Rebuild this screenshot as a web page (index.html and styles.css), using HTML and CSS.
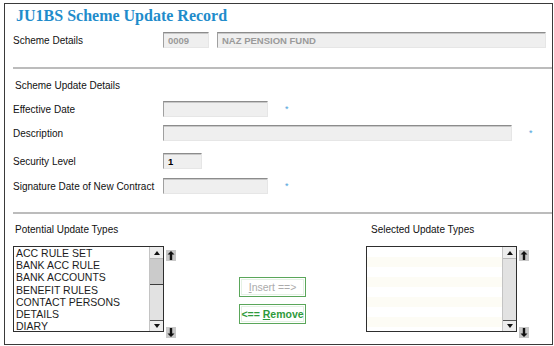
FILE: index.html
```html
<!DOCTYPE html>
<html lang="en">
<head>
    <meta charset="UTF-8">
    <title>JU1BS Scheme Update Record</title>
    <link rel="stylesheet" href="styles.css">
</head>
<body>
    <div class="frame">
        <h1 class="title">JU1BS Scheme Update Record</h1>

        <div class="row row-scheme">
            <span class="label">Scheme Details</span>
            <span class="field f-code">0009</span>
            <span class="field f-name">NAZ PENSION FUND</span>
        </div>

        <div class="divider div-top"></div>

        <div class="section-head">Scheme Update Details</div>

        <div class="row row-eff">
            <span class="label">Effective Date</span>
            <span class="field f-date"></span>
            <span class="req">*</span>
        </div>
        <div class="row row-desc">
            <span class="label">Description</span>
            <span class="field f-desc"></span>
            <span class="req">*</span>
        </div>
        <div class="row row-sec">
            <span class="label">Security Level</span>
            <span class="field f-sec">1</span>
        </div>
        <div class="row row-sig">
            <span class="label">Signature Date of New Contract</span>
            <span class="field f-date"></span>
            <span class="req">*</span>
        </div>

        <div class="divider div-bottom"></div>

        <div class="lists">
            <div class="group">
                <div class="group-label">Potential Update Types</div>
                <div class="list-wrap">
                    <div class="listbox">
                        <div class="items">
                            <div>ACC RULE SET</div>
                            <div>BANK ACC RULE</div>
                            <div>BANK ACCOUNTS</div>
                            <div>BENEFIT RULES</div>
                            <div>CONTACT PERSONS</div>
                            <div>DETAILS</div>
                            <div>DIARY</div>
                        </div>
                        <div class="scrollbar">
                            <div class="sb-btn"><span class="tri-up"></span></div>
                            <div class="sb-thumb"></div>
                            <div class="sb-fill"></div>
                            <div class="sb-btn sb-down"><span class="tri-down"></span></div>
                        </div>
                    </div>
                    <div class="mv-col">
                        <div class="mv"><svg width="8" height="9" viewBox="0 0 8 9"><path d="M4 0 L0.5 3.5 H2.8 V9 H5.2 V3.5 H7.5 Z" fill="#111"/></svg></div>
                        <div class="mv"><svg width="8" height="9" viewBox="0 0 8 9"><path d="M4 9 L0.5 5.5 H2.8 V0 H5.2 V5.5 H7.5 Z" fill="#111"/></svg></div>
                    </div>
                </div>
            </div>

            <div class="actions">
                <div class="btn btn-insert"><u>I</u>nsert ==&gt;</div>
                <div class="btn btn-remove">&lt;== <u>R</u>emove</div>
            </div>

            <div class="group group-right">
                <div class="group-label">Selected Update Types</div>
                <div class="list-wrap">
                    <div class="listbox">
                        <div class="items items-empty"></div>
                        <div class="scrollbar">
                            <div class="sb-btn"><span class="tri-up"></span></div>
                            <div class="sb-fill"></div>
                            <div class="sb-btn sb-down"><span class="tri-down"></span></div>
                        </div>
                    </div>
                    <div class="mv-col">
                        <div class="mv"><svg width="8" height="9" viewBox="0 0 8 9"><path d="M4 0 L0.5 3.5 H2.8 V9 H5.2 V3.5 H7.5 Z" fill="#111"/></svg></div>
                        <div class="mv"><svg width="8" height="9" viewBox="0 0 8 9"><path d="M4 9 L0.5 5.5 H2.8 V0 H5.2 V5.5 H7.5 Z" fill="#111"/></svg></div>
                    </div>
                </div>
            </div>
        </div>
    </div>
</body>
</html>
```

FILE: styles.css
```css
body {
    margin: 0;
    background: #fff;
    font-family: "Liberation Sans", Arial, sans-serif;
    color: #111;
}

.frame {
    box-sizing: border-box;
    width: 549px;
    height: 342px;
    margin: 3px 0 0 4px;
    border: 1px solid #3a3a3a;
}

.title {
    margin: 0;
    padding-left: 11px;
    height: 24px;
    line-height: 24px;
    font-family: "Liberation Serif", "Times New Roman", serif;
    font-size: 16px;
    font-weight: bold;
    color: #1f8ccb;
}

.row {
    display: flex;
    align-items: center;
    height: 16px;
    padding-left: 8px;
}

.label {
    width: 150px;
    flex-shrink: 0;
    font-size: 10px;
}

.row-scheme { margin-top: 4px; }
.row-eff { margin-top: 8px; }
.row-desc { margin-top: 8px; }
.row-sec { margin-top: 12px; }
.row-sig { margin-top: 9px; }

.field {
    box-sizing: border-box;
    height: 16px;
    background: #efefef;
    border-top: 1px solid #8c8c8c;
    border-left: 1px solid #a0a0a0;
    border-right: 1px solid #e6e6e6;
    border-bottom: 1px solid #e6e6e6;
    box-shadow: inset 0 1px 0 #c8c8c8;
    padding-left: 4px;
    font-size: 9.5px;
    font-weight: bold;
    line-height: 15px;
    color: #9a9a9a;
}

.f-code { width: 46px; }
.f-name { width: 329px; margin-left: 8px; }
.f-date { width: 105px; }
.f-desc { width: 349px; }
.f-sec {
    width: 39px;
    color: #000;
}

.req {
    margin-left: 17px;
    font-size: 9px;
    color: #4aa3dc;
}

.divider {
    height: 2px;
    margin-left: 8px;
    background: #bcbcbc;
}

.div-top { margin-top: 19px; }
.div-bottom { margin-top: 18px; }

.section-head {
    margin-top: 10px;
    padding-left: 10px;
    height: 14px;
    line-height: 14px;
    font-size: 10px;
}

.lists {
    display: flex;
    margin-top: 9px;
    padding-left: 8px;
}

.group-label {
    height: 14px;
    line-height: 14px;
    padding-left: 2px;
    margin-bottom: 9px;
    font-size: 10px;
}

.group-right {
    margin-left: 60px;
}

.group-right .group-label {
    padding-left: 5px;
}

.list-wrap {
    display: flex;
    align-items: flex-start;
    gap: 2px;
}

.listbox {
    box-sizing: border-box;
    display: flex;
    width: 151px;
    height: 86px;
    border: 1px solid #2e2e2e;
}

.items {
    flex: 1;
    overflow: hidden;
    padding-left: 2px;
    font-size: 10.5px;
    line-height: 12.2px;
    color: #1c1c1c;
}

.items-empty {
    background: repeating-linear-gradient(#fff 0, #fff 10px, #fdfcf5 10px, #fdfcf5 20px);
}

.scrollbar {
    display: flex;
    flex-direction: column;
    width: 13px;
    background: #e2e2e2;
    border-left: 1px solid #c4c4c4;
}

.sb-btn {
    display: flex;
    align-items: center;
    justify-content: center;
    height: 11px;
    background: #ececec;
    border-bottom: 1px solid #b8b8b8;
}

.sb-down {
    height: 10px;
    border-bottom: none;
    border-top: 1px solid #555;
}

.sb-thumb {
    height: 25px;
    background: #cbcbcb;
    border-bottom: 1px solid #3c3c3c;
}

.sb-fill {
    flex: 1;
}

.tri-up {
    width: 0;
    height: 0;
    border-left: 3px solid transparent;
    border-right: 3px solid transparent;
    border-bottom: 4px solid #111;
}

.tri-down {
    width: 0;
    height: 0;
    border-left: 3px solid transparent;
    border-right: 3px solid transparent;
    border-top: 4px solid #111;
}

.mv-col {
    box-sizing: border-box;
    display: flex;
    flex-direction: column;
    justify-content: space-between;
    height: 92px;
    padding-top: 4px;
}

.mv {
    display: flex;
    align-items: center;
    justify-content: center;
    width: 10px;
    height: 11px;
    background: #c8c8c8;
}

.actions {
    display: flex;
    flex-direction: column;
    gap: 7px;
    margin-left: 63px;
    margin-top: 54px;
}

.btn {
    box-sizing: border-box;
    width: 67px;
    height: 20px;
    border: 1px solid #5aa65a;
    box-shadow: inset 0 0 0 1px #fff, inset 0 0 0 2px #e4f1e4;
    background: #fff;
    text-align: center;
    line-height: 18px;
    font-size: 10.5px;
}

.btn-insert {
    color: #ababab;
}

.btn-remove {
    color: #2f9a3c;
    font-weight: bold;
}
```
